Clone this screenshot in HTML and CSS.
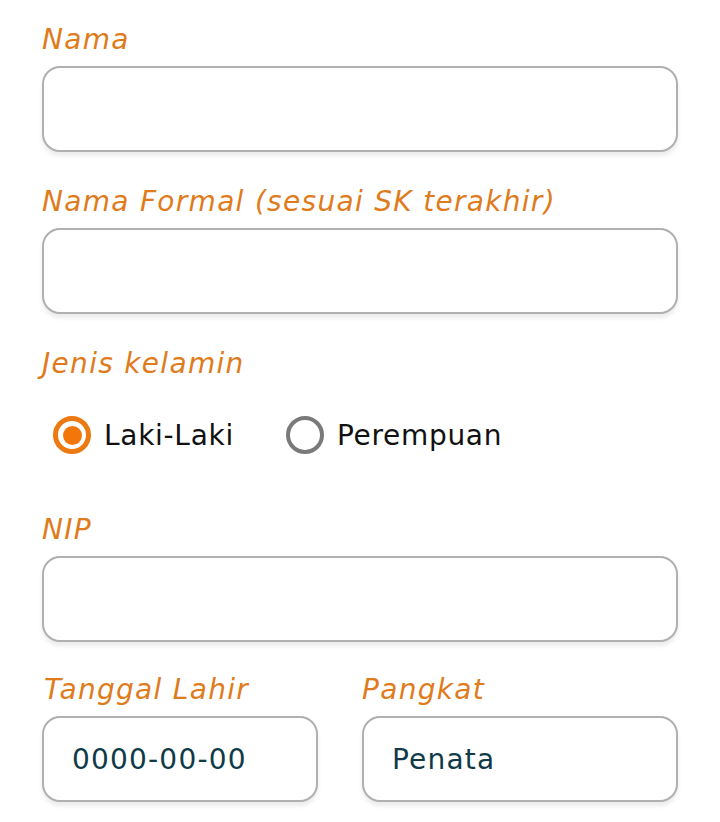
FILE: index.html
```html
<!DOCTYPE html>
<html lang="id">
<head>
<meta charset="utf-8">
<link rel="stylesheet" href="styles.css">
</head>
<body>
<form class="form">
  <div class="field">
    <label class="label">Nama</label>
    <div class="input"></div>
  </div>
  <div class="field">
    <label class="label">Nama Formal (sesuai SK terakhir)</label>
    <div class="input"></div>
  </div>
  <div class="field">
    <label class="label">Jenis kelamin</label>
    <div class="radios">
      <div class="radio-item">
        <span class="radio checked"><span class="dot"></span></span>
        <span class="radio-text">Laki-Laki</span>
      </div>
      <div class="radio-item second">
        <span class="radio"></span>
        <span class="radio-text">Perempuan</span>
      </div>
    </div>
  </div>
  <div class="field nip">
    <label class="label">NIP</label>
    <div class="input"></div>
  </div>
  <div class="row">
    <div class="field">
      <label class="label indent">Tanggal Lahir</label>
      <div class="input value">0000-00-00</div>
    </div>
    <div class="field">
      <label class="label">Pangkat</label>
      <div class="input value">Penata</div>
    </div>
  </div>
</form>
</body>
</html>
```
FILE: styles.css
```css
html, body {
  margin: 0;
  padding: 0;
  background: #ffffff;
}
body {
  font-family: "DejaVu Sans", "Open Sans", sans-serif;
}
.form {
  padding: 19px 42px 0 42px;
  display: flex;
  flex-direction: column;
}
.field {
  display: flex;
  flex-direction: column;
  gap: 11px;
  margin-bottom: 29px;
}
.field.nip {
  margin-bottom: 27px;
}
.label {
  box-sizing: border-box;
  font-style: italic;
  font-size: 28px;
  line-height: 36px;
  height: 36px;
  padding-top: 3px;
  color: #e07b1c;
  letter-spacing: 1.3px;
  white-space: nowrap;
}
.label.indent {
  padding-left: 2px;
}
.input {
  box-sizing: border-box;
  height: 86px;
  border: 2px solid #b0b0b0;
  border-radius: 18px;
  background: #fff;
  box-shadow: 0 4px 4px rgba(0, 0, 0, 0.08);
}
.input.value {
  display: flex;
  align-items: center;
  padding-left: 28px;
  font-size: 28px;
  letter-spacing: 1.2px;
  color: #0f3a48;
}
.radios {
  display: flex;
  align-items: center;
  height: 40px;
  margin-top: 25px;
  margin-bottom: 25px;
  padding-left: 11px;
}
.radio-item {
  display: flex;
  align-items: center;
  gap: 13px;
}
.radio-item.second {
  margin-left: 52px;
}
.radio {
  box-sizing: border-box;
  width: 38px;
  height: 38px;
  border-radius: 50%;
  border: 4px solid #7a7a7a;
  display: flex;
  align-items: center;
  justify-content: center;
}
.radio.checked {
  border: 5px solid #ec7a12;
}
.dot {
  width: 19px;
  height: 19px;
  border-radius: 50%;
  background: #f2760a;
}
.radio-text {
  font-size: 28px;
  letter-spacing: 0.7px;
  color: #111;
}
.row {
  display: grid;
  grid-template-columns: 276px 1fr;
  column-gap: 44px;
}
```
